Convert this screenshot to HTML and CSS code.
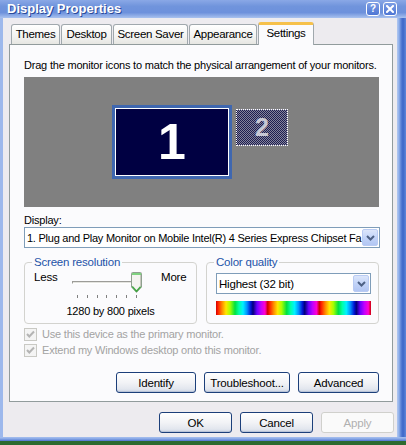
FILE: index.html
```html
<!DOCTYPE html>
<html>
<head>
<meta charset="utf-8">
<title>Display Properties</title>
<link rel="stylesheet" href="styles.css">
</head>
<body>
<div class="window">
  <div class="titlebar">
    <span class="title">Display Properties</span>
    <div class="tb-btns">
      <span class="tb-btn help">?</span>
      <span class="tb-btn close"><svg width="8" height="8" viewBox="0 0 8 8"><path d="M1 1 L7 7 M7 1 L1 7" stroke="#fff" stroke-width="2" stroke-linecap="square"/></svg></span>
    </div>
  </div>
  <div class="body-row">
    <div class="client">
      <div class="tabs">
        <div class="tab t-themes">Themes</div>
        <div class="tab t-desktop">Desktop</div>
        <div class="tab t-saver">Screen Saver</div>
        <div class="tab t-appear">Appearance</div>
        <div class="tab t-settings active">Settings</div>
      </div>
      <div class="panel">
        <p class="intro">Drag the monitor icons to match the physical arrangement of your monitors.</p>
        <div class="monitors">
          <div class="mon1"><div class="mon1-inner">1</div></div>
          <div class="mon2">2</div>
        </div>
        <div class="lbl">Display:</div>
        <div class="combo wide">
          <span class="combo-text">1. Plug and Play Monitor on Mobile Intel(R) 4 Series Express Chipset Fa</span>
          <span class="combo-btn"><svg width="9" height="6" viewBox="0 0 9 6"><path d="M1 1 L4.5 4.5 L8 1" fill="none" stroke="#4d6185" stroke-width="2"/></svg></span>
        </div>
        <div class="groups">
          <fieldset class="group res">
            <legend>Screen resolution</legend>
            <div class="res-row">
              <span class="less">Less</span>
              <div class="slider">
                <div class="track"></div>
                <div class="ticks"><i></i><i></i><i></i><i></i><i></i><i></i><i></i></div>
                <svg class="thumb" width="11" height="21" viewBox="0 0 11 21">
                  <path d="M0.5 1.5 Q0.5 0.5 1.5 0.5 L9.5 0.5 Q10.5 0.5 10.5 1.5 L10.5 15 L5.5 20.3 L0.5 15 Z" fill="#f4f4f0" stroke="#8fa08f"/>
                  <path d="M1 1 L10 1 L10 3 L1 3 Z" fill="#7fd27f"/>
                  <path d="M1.2 14.5 L5.5 19.3 L9.8 14.5" fill="none" stroke="#41a641" stroke-width="1.5"/>
                  <path d="M9.5 3 L9.5 14.5" stroke="#c8c8c0"/>
                </svg>
              </div>
              <span class="more">More</span>
            </div>
            <div class="pixels">1280 by 800 pixels</div>
          </fieldset>
          <fieldset class="group color">
            <legend>Color quality</legend>
            <div class="combo small">
              <span class="combo-text">Highest (32 bit)</span>
              <span class="combo-btn"><svg width="9" height="6" viewBox="0 0 9 6"><path d="M1 1 L4.5 4.5 L8 1" fill="none" stroke="#4d6185" stroke-width="2"/></svg></span>
            </div>
            <div class="rainbow"></div>
          </fieldset>
        </div>
        <div class="check first">
          <span class="box"><svg width="11" height="11" viewBox="0 0 11 11"><path d="M2 5 L4.3 7.5 L9 2.5" fill="none" stroke="#b4b4b4" stroke-width="2"/></svg></span>
          <span>Use this device as the primary monitor.</span>
        </div>
        <div class="check">
          <span class="box"><svg width="11" height="11" viewBox="0 0 11 11"><path d="M2 5 L4.3 7.5 L9 2.5" fill="none" stroke="#b4b4b4" stroke-width="2"/></svg></span>
          <span>Extend my Windows desktop onto this monitor.</span>
        </div>
        <div class="btn-row">
          <button class="btn b-identify">Identify</button>
          <button class="btn b-trouble">Troubleshoot...</button>
          <button class="btn b-adv">Advanced</button>
        </div>
      </div>
      <div class="dlg-btns">
        <button class="btn b-dlg">OK</button>
        <button class="btn b-dlg">Cancel</button>
        <button class="btn b-dlg disabled">Apply</button>
      </div>
    </div>
    <div class="frame-r"></div>
  </div>
  <div class="frame-b"></div>
</div>
</body>
</html>
```
FILE: styles.css
```css
* { box-sizing: border-box; }
html, body { margin: 0; padding: 0; }
body {
  width: 406px;
  height: 445px;
  overflow: hidden;
  background: #2d6a30;
  font-family: "Liberation Sans", Arial, sans-serif;
  font-size: 11px;
  letter-spacing: -0.2px;
  color: #000;
}
.window {
  height: 441px;
  display: flex;
  flex-direction: column;
  background: #9db8ec;
}
.titlebar {
  height: 18px;
  flex: none;
  display: flex;
  align-items: center;
  justify-content: space-between;
  padding: 0 9px 0 7px;
  background: linear-gradient(180deg, #8aa8e6 0%, #7094dc 35%, #6d91dc 70%, #a9c2ef 100%);
}
.title {
  color: #fff;
  font-weight: bold;
  font-size: 13px;
  letter-spacing: 0;
  line-height: 18px;
  text-shadow: 1px 1px 0 #2a4a9a;
}
.tb-btns { display: flex; gap: 3px; }
.tb-btn {
  width: 14px;
  height: 14px;
  border: 1px solid #fff;
  border-radius: 3px;
  background: linear-gradient(180deg, #7c9ee4, #4e76d4);
  color: #fff;
  font-weight: bold;
  font-size: 10px;
  line-height: 12px;
  letter-spacing: 0;
  display: flex;
  align-items: center;
  justify-content: center;
}
.body-row { flex: 1; display: flex; }
.client {
  width: 394px;
  margin-left: 3px;
  background: #edebef;
  padding: 4px 3px 0 6px;
  display: flex;
  flex-direction: column;
}
.frame-r {
  width: 9px;
  background: linear-gradient(90deg, #b3c8f0 0, #8fb0ea 2px, #5a80d6 4px, #3d66c8 6px, #5f86d9 9px);
}
.frame-b {
  height: 4px;
  flex: none;
  background: linear-gradient(180deg, #a7c0ee, #86a6e6 2px, #4a72cf 4px);
}
.tabs {
  height: 22px;
  display: flex;
  align-items: flex-end;
  padding-left: 2px;
  gap: 1px;
}
.tab {
  height: 20px;
  border: 1px solid #a0a8ad;
  border-bottom: none;
  border-radius: 3px 3px 0 0;
  background: linear-gradient(180deg, #ffffff, #f3f3f1 60%, #e6e6e2);
  text-align: center;
  line-height: 19px;
  font-size: 11.5px;
  letter-spacing: -0.3px;
}
.t-themes { width: 49px; }
.t-desktop { width: 51px; }
.t-saver { width: 75px; }
.t-appear { width: 68px; }
.t-settings { width: 56px; }
.tab.active {
  height: 23px;
  margin-bottom: -1px;
  position: relative;
  z-index: 2;
  background: #fbfbfd;
  border-top: 3px solid #f6c14b;
  line-height: 17px;
}
.panel {
  width: 384px;
  height: 358px;
  border: 1px solid #919b9c;
  background: #fbfbfd;
  padding: 13px 13px 0 14px;
}
.intro {
  margin: 0;
  line-height: 14px;
  height: 14px;
  white-space: nowrap;
}
.monitors {
  margin-top: 5px;
  height: 130px;
  background: #808080;
  display: flex;
  justify-content: center;
  align-items: flex-start;
  gap: 4px;
  padding: 28px 3px 0 0;
}
.mon1 {
  width: 120px;
  height: 74px;
  background: #3f67b0;
  padding: 3px;
}
.mon1-inner {
  height: 100%;
  border: 1px solid #fff;
  background: #000042;
  color: #fff;
  font-weight: bold;
  font-size: 50px;
  letter-spacing: 0;
  line-height: 66px;
  text-align: center;
}
.mon2 {
  margin-top: 4px;
  width: 52px;
  height: 37px;
  border: 1px dotted #fff;
  background-color: #808080;
  background-image: repeating-conic-gradient(#1c1c50 0 25%, #84849a 0 50%);
  background-size: 2px 2px;
  color: #c8c8d4;
  font-weight: bold;
  font-size: 25px;
  letter-spacing: 0;
  line-height: 35px;
  text-align: center;
}
.lbl {
  margin-top: 6px;
  line-height: 14px;
  height: 14px;
}
.combo {
  height: 21px;
  border: 1px solid #7f9db9;
  background: #fff;
  display: flex;
  align-items: center;
  justify-content: space-between;
  padding: 0 1px 0 2px;
  overflow: hidden;
}
.combo.wide { width: 356px; }
.combo-text {
  white-space: nowrap;
  overflow: hidden;
  flex: 1;
  font-size: 11px;
  letter-spacing: -0.25px;
}
.combo.small .combo-text { font-size: 11.5px; letter-spacing: -0.2px; }
.combo-btn {
  flex: none;
  width: 16px;
  height: 17px;
  border: 1px solid #b9cbf3;
  border-radius: 2px;
  background: linear-gradient(180deg, #dce6fb, #c3d4f8 50%, #b2c6f3);
  display: flex;
  align-items: center;
  justify-content: center;
}
.groups {
  margin-top: 7px;
  display: flex;
  gap: 9px;
}
.group {
  margin: 0;
  width: 173px;
  border: 1px solid #d3d3cf;
  border-radius: 4px;
  min-inline-size: 0;
}
.group legend {
  color: #2453a8;
  line-height: 14px;
  padding: 0 2px;
  margin-left: -2px;
  font-size: 11.5px;
}
.res { padding: 1px 9px 5px 9px; }
.res-row {
  display: flex;
  align-items: flex-start;
  height: 29px;
}
.less, .more { line-height: 14px; font-size: 11.5px; }
.less { width: 38px; }
.more { margin-left: 14px; }
.slider {
  position: relative;
  width: 75px;
  height: 29px;
}
.track {
  position: absolute;
  left: 0;
  top: 11px;
  width: 65px;
  height: 3px;
  border-top: 1px solid #9c9c98;
  border-bottom: 1px solid #fff;
  border-left: 1px solid #9c9c98;
  background: #e4e4e0;
}
.ticks {
  position: absolute;
  left: 5px;
  top: 25px;
  width: 60px;
  height: 3px;
  display: flex;
  justify-content: space-between;
}
.ticks i {
  display: block;
  width: 1px;
  height: 3px;
  background: #808080;
}
.thumb {
  position: absolute;
  left: 59px;
  top: 2px;
}
.pixels {
  margin-top: 5px;
  line-height: 14px;
  text-align: center;
  font-size: 11px;
}
.color { padding: 4px 7px 8px 9px; }
.combo.small { width: 155px; height: 21px; }
.rainbow {
  margin-top: 7px;
  width: 155px;
  height: 14px;
  background: repeating-linear-gradient(90deg,
    #d00000 0px, #ff2000 2px, #ff8a00 6px, #ffe600 10px, #a6ff00 14px,
    #00e040 19px, #00ffa8 23px, #00f0ff 27px, #0090ff 31px, #0010d0 35px,
    #00007a 37px, #6a00ff 41px, #c000ff 45px, #ff00d0 49px, #d00000 51.67px);
}
.check {
  display: flex;
  align-items: center;
  gap: 5px;
  height: 16px;
  color: #a3a3a3;
  font-size: 11px;
}
.check.first { margin-top: 2px; }
.box {
  width: 13px;
  height: 13px;
  border: 1px solid #c9c9c4;
  background: #f4f4f4;
  display: flex;
  align-items: center;
  justify-content: center;
}
.btn-row {
  margin-top: 14px;
  display: flex;
  justify-content: flex-end;
  gap: 8px;
}
.btn {
  height: 21px;
  border: 1px solid #1c3f7a;
  border-radius: 3px;
  background: linear-gradient(180deg, #ffffff 0%, #f2f3f6 50%, #e2e6ee 85%, #c9d2e2 100%);
  font-family: "Liberation Sans", Arial, sans-serif;
  font-size: 11.5px;
  letter-spacing: -0.2px;
  color: #000;
  padding: 0;
  box-shadow: inset 0 -1px 0 #b9c4d8;
}
.b-identify { width: 80px; }
.b-trouble { width: 86px; }
.b-adv { width: 81px; }
.dlg-btns {
  margin-top: 10px;
  display: flex;
  justify-content: flex-end;
  gap: 8px;
}
.b-dlg { width: 73px; }
.btn.disabled {
  border-color: #d0d0cc;
  background: #fafafa;
  color: #b0b0b0;
  box-shadow: none;
}
```
